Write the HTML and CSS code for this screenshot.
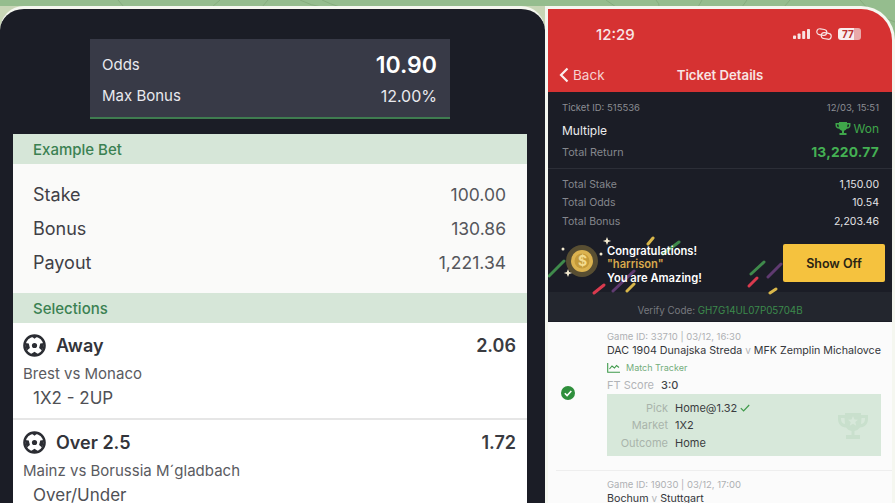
FILE: index.html
```html
<!DOCTYPE html>
<html lang="en">
<head>
<meta charset="utf-8">
<title>Tickets</title>
<link rel="stylesheet" href="styles.css">
</head>
<body>
<svg class="pattern" width="895" height="40" viewBox="0 0 895 40" aria-hidden="true">
  <g fill="none" stroke="#86ad7e" stroke-width="1">
    <path d="M118 0l6 7M212 7l8-7M268 0l-6 7M300 0q12 6 22 7M340 7q-10-3-18-7M606 0l10 7M656 0q4 4 3 7M702 0l-4 7M747 0l-5 7M790 0l-6 7M860 0q10 14 35 22"/>
  </g>
</svg>
<main class="stage">
  <section class="phone phone-left">
    <div class="left-inner">
      <div class="odds">
        <div class="odds-row"><span>Odds</span><strong>10.90</strong></div>
        <div class="odds-row"><span>Max Bonus</span><span class="pct">12.00%</span></div>
      </div>
      <div class="card">
        <h2 class="band">Example Bet</h2>
        <div class="example">
          <div class="ex-row"><span>Stake</span><span class="ex-val">100.00</span></div>
          <div class="ex-row"><span>Bonus</span><span class="ex-val">130.86</span></div>
          <div class="ex-row"><span>Payout</span><span class="ex-val">1,221.34</span></div>
        </div>
        <h2 class="band">Selections</h2>
        <article class="sel">
          <div class="sel-head">
            <svg class="ball" viewBox="0 0 24 24" aria-hidden="true"><circle cx="12" cy="12" r="10.500" fill="#fff" stroke="#2b2d33" stroke-width="2.600"/><circle cx="12" cy="12" r="2.700" fill="#2b2d33"/><path d="M8.500 2l3.500 3 3.500-3zM2 9.500l4 .5 1.200 4.500-3.400 3zM22 9.500l-4 .5-1.200 4.500 3.400 3zM8 21l4-2.600 4 2.600-1 1.500H9z" fill="#2b2d33"/></svg>
            <span class="sel-name">Away</span><span class="sel-odds">2.06</span>
          </div>
          <div class="sel-match">Brest vs Monaco</div>
          <div class="sel-market">1X2 - 2UP</div>
        </article>
        <article class="sel">
          <div class="sel-head">
            <svg class="ball" viewBox="0 0 24 24" aria-hidden="true"><circle cx="12" cy="12" r="10.500" fill="#fff" stroke="#2b2d33" stroke-width="2.600"/><circle cx="12" cy="12" r="2.700" fill="#2b2d33"/><path d="M8.500 2l3.500 3 3.500-3zM2 9.500l4 .5 1.200 4.500-3.400 3zM22 9.500l-4 .5-1.200 4.500 3.400 3zM8 21l4-2.600 4 2.600-1 1.500H9z" fill="#2b2d33"/></svg>
            <span class="sel-name">Over 2.5</span><span class="sel-odds">1.72</span>
          </div>
          <div class="sel-match">Mainz vs Borussia M´gladbach</div>
          <div class="sel-market">Over/Under</div>
        </article>
      </div>
    </div>
  </section>

  <section class="phone phone-right">
    <header class="red">
      <div class="status">
        <span class="time">12:29</span>
        <span class="status-icons">
          <svg width="17" height="10" viewBox="0 0 17 10" aria-hidden="true"><g fill="#f7e3e3"><rect x="0" y="6.500" width="3" height="3.500" rx=".8"/><rect x="4.600" y="4.500" width="3" height="5.500" rx=".8"/><rect x="9.200" y="2" width="3" height="8" rx=".8"/><rect x="14" y="0" width="3" height="10" rx=".8"/></g></svg>
          <svg width="18" height="12" viewBox="0 0 18 12" aria-hidden="true"><g fill="none" stroke="#f7e3e3" stroke-width="1.200" transform="rotate(10 9 6)"><rect x="1.500" y="1.500" width="10" height="6" rx="3"/><rect x="6.500" y="4.500" width="10" height="6" rx="3"/></g></svg>
          <span class="battery">77</span>
        </span>
      </div>
      <nav class="nav">
        <span class="back"><svg width="10" height="16" viewBox="0 0 10 16" aria-hidden="true"><path d="M8.500 1.500L2 8l6.500 6.500" fill="none" stroke="#fbecec" stroke-width="2.200"/></svg>Back</span>
        <span class="nav-title">Ticket Details</span>
      </nav>
    </header>
    <div class="dark">
      <div class="summary">
        <div class="line meta"><span>Ticket ID: 515536</span><span>12/03, 15:51</span></div>
        <div class="line multi"><span>Multiple</span>
          <span class="won"><svg width="16" height="14" viewBox="0 0 16 14" aria-hidden="true"><path d="M4 0h8v1h3.500v2.500c0 2-1.500 3-3.800 3.200C11 7.800 10 8.500 9 8.700V11h2.500v2h-7v-2H7V8.700C6 8.500 5 7.800 4.300 6.700 2 6.500.5 5.500.5 3.500V1H4zM2 2.500v1c0 1 .7 1.500 1.800 1.700L3.500 2.500zM14 2.500h-1.500l-.3 2.700C13.300 5 14 4.500 14 3.500z" fill="#3fa64a"/></svg>Won</span></div>
        <div class="line ret"><span>Total Return</span><strong>13,220.77</strong></div>
      </div>
      <div class="totals">
        <div class="line"><span>Total Stake</span><span class="tv">1,150.00</span></div>
        <div class="line"><span>Total Odds</span><span class="tv">10.54</span></div>
        <div class="line"><span>Total Bonus</span><span class="tv">2,203.46</span></div>
      </div>
      <div class="banner">
        <svg class="confetti" width="345" height="62" viewBox="0 0 345 62" aria-hidden="true">
          <g stroke-width="3" stroke-linecap="round" fill="none">
            <path d="M1 42l15-15M115 20l16-12M203 40l13-12" stroke="#3f8a4b"/>
            <path d="M46 59l10-8M201 52l8-8" stroke="#d93a4e"/>
            <path d="M65 57l21-20M220 43l13-13" stroke="#5f3a70"/>
            <path d="M100 10l5-6M79 57l7-7M222 59l6-4" stroke="#d8b64a"/>
          </g>
          <g fill="#f2e9cf"><path d="M59 3l1.200 3 3 1-3 1-1.200 3-1.200-3-3-1 3-1z"/><circle cx="15" cy="15" r="1.500"/><circle cx="53" cy="20" r="1.500"/><path d="M20 35l1.200 3 3 1-3 1-1.200 3-1.200-3-3-1 3-1z"/></g>
          <circle cx="34" cy="27" r="16" fill="#e8c04f" opacity=".3"/>
          <circle cx="34" cy="27" r="11" fill="#dcb350"/>
          <circle cx="34" cy="27" r="7.500" fill="#c49a3a"/>
        </svg>
        <div class="coin-sign">$</div>
        <div class="congrats"><div>Congratulations!</div><div class="user">"harrison"</div><div>You are Amazing!</div></div>
        <button class="show">Show Off</button>
      </div>
      <div class="verify">Verify Code: <span>GH7G14UL07P05704B</span></div>
    </div>
    <div class="games">
      <article class="game">
        <div class="tick"><svg width="14" height="14" viewBox="0 0 14 14" aria-hidden="true"><circle cx="7" cy="7" r="7" fill="#2f8f3c"/><path d="M3.800 7.200l2.300 2.300 4.200-4.500" fill="none" stroke="#fff" stroke-width="1.600"/></svg></div>
        <div class="game-body">
          <div class="gid">Game ID: 33710 | 03/12, 16:30</div>
          <div class="gname">DAC 1904 Dunajska Streda <i>v</i> MFK Zemplin Michalovce</div>
          <div class="tracker"><svg width="13" height="10" viewBox="0 0 13 10" aria-hidden="true"><path d="M.7 0v9.300H13M2.500 6l2.500-3 2.500 2 2-2.500 2.500 2" fill="none" stroke="#3f9a4b" stroke-width="1.100"/></svg>Match Tracker</div>
          <div class="score"><span>FT Score</span><b>3:0</b></div>
          <div class="pick">
            <div class="pick-row"><span>Pick</span><b>Home@1.32 <svg width="10" height="8" viewBox="0 0 10 8" aria-hidden="true"><path d="M.8 4.200l2.800 2.800L9.200 1" fill="none" stroke="#3f9a4b" stroke-width="1.200"/></svg></b></div>
            <div class="pick-row"><span>Market</span><b>1X2</b></div>
            <div class="pick-row"><span>Outcome</span><b>Home</b></div>
            <svg class="cup" width="30" height="26" viewBox="0 0 30 26" aria-hidden="true"><path fill-rule="evenodd" d="M7 0h16v2h7v4c0 5-3 8-8 8.500-1.500 2-3.500 3.200-5.500 3.500v4H22v4H8v-4h5.500v-4C11.500 17.700 9.500 16.500 8 14.500 3 14 0 11 0 6V2h7zM3 5v1c0 3 1.500 4.500 4 5L6.500 5zM27 5h-3.500L23 11c2.500-.5 4-2 4-5zM15 3l1.500 3.500 3.500.3-2.700 2.300.9 3.600L15 10.800l-3.200 1.900.9-3.600L10 6.800l3.500-.3z" fill="#c9e0cd"/></svg>
          </div>
        </div>
      </article>
      <article class="game next">
        <div class="tick"></div>
        <div class="game-body">
          <div class="gid">Game ID: 19030 | 03/12, 17:00</div>
          <div class="gname">Bochum <i>v</i> Stuttgart</div>
        </div>
      </article>
    </div>
  </section>
</main>
</body>
</html>
```
FILE: styles.css
```css
* { box-sizing: border-box; margin: 0; padding: 0; }
html, body { width: 895px; height: 503px; overflow: hidden; }
body { background: #95bd8e; font-family: Inter, "Liberation Sans", sans-serif; position: relative; }
.pattern { position: absolute; left: 0; top: 0; }
.stage { position: relative; display: flex; height: 503px; padding-top: 6px; }

.phone { height: 510px; flex: none; overflow: hidden; }
.phone-left { width: 548px; background: #c8d6b6; border-right: 3px solid #f5f7f0; }
.left-inner { height: 100%; background: #1b1d26; border-top: 3px solid #f5f7f0; border-radius: 24px 24px 0 0; padding-top: 30px; }
.phone-right { width: 347px; background: #fbfbfb; border-radius: 0 34px 0 0; border-top: 3px solid #f5f7f0; border-right: 3px solid #f5f7f0; }

.odds { width: 360px; height: 80px; margin-left: 90px; background: #383a47; border-bottom: 2px solid #3f7c50; padding: 10px 13px 0 12px; color: #e9e9ee; }
.odds-row { display: flex; justify-content: space-between; align-items: center; height: 31px; font-size: 15px; }
.odds-row strong { font-size: 23px; font-weight: 600; color: #fff; }
.pct { font-size: 16px; }

.card { width: 514px; margin: 15px 0 0 13px; background: #fff; }
.band { height: 30px; background: #d6e6d8; color: #3b8152; font-size: 15px; font-weight: 500; line-height: 31px; padding-left: 20px; }
.example { height: 129px; background: #fafaf9; padding: 14px 21px 0 20px; }
.ex-row { display: flex; justify-content: space-between; height: 34px; line-height: 34px; font-size: 18px; color: #3f4046; }
.ex-val { font-size: 17.500px; color: #55565c; }

.sel { height: 97px; padding: 10px 11px 0 10px; border-bottom: 2px solid #e6e6e6; color: #2f3036; }
.sel-head { display: flex; align-items: center; height: 24px; gap: 10px; }
.ball { width: 23px; height: 23px; }
.sel-name { font-size: 18px; font-weight: 600; flex: 1; color: #33343a; }
.sel-odds { font-size: 18px; font-weight: 600; color: #3a3b41; }
.sel-match { font-size: 15px; margin-top: 7px; line-height: 20px; color: #5a5b61; }
.sel-market { font-size: 17px; margin: 2px 0 0 10px; line-height: 24px; color: #4f5055; }

.red { height: 83px; background: #d63232; color: #fff; }
.status { display: flex; justify-content: space-between; align-items: center; height: 50px; padding: 0 31px 0 48px; }
.time { font-size: 15px; font-weight: 500; color: #f9e6e6; }
.status-icons { display: flex; align-items: center; gap: 5px; }
.battery { background: linear-gradient(90deg, #f9eeee 70%, #e9a9a9 70%); color: #b83030; border-radius: 3px; font-size: 10px; font-weight: 700; width: 23px; height: 12px; line-height: 12px; padding-right: 3px; text-align: center; }
.nav { position: relative; display: flex; align-items: center; justify-content: center; height: 31px; }
.nav-title { font-size: 13.200px; font-weight: 600; color: #f8e4e4; }
.back { position: absolute; left: 11px; top: 8px; display: flex; align-items: center; gap: 4px; font-size: 13.500px; color: #f6d0d0; }

.dark { background: #1b1d26; height: 230px; }
.summary { height: 77px; padding: 8px 13px 0 14px; border-bottom: 1px solid #2c2e37; }
.line { display: flex; justify-content: space-between; align-items: center; }
.meta { font-size: 9.500px; color: #8b8d93; height: 14px; }
.multi { font-size: 12px; color: #eceded; height: 30px; padding-top: 3px; }
.won { display: flex; align-items: center; gap: 3px; color: #3fa64a; font-size: 12px; margin-top: -4px; }
.ret { font-size: 10.800px; color: #85878d; height: 12px; margin-top: 2px; }
.ret strong { font-size: 13.800px; font-weight: 700; color: #44b053; letter-spacing: .2px; }
.totals { padding: 6px 13px 0 14px; height: 65px; font-size: 10.500px; color: #85878d; }
.totals .line { height: 18.500px; }
.tv { color: #e4e4e6; }
.banner { position: relative; height: 58px; display: flex; align-items: center; justify-content: space-between; padding: 0 7px 0 59px; }
.confetti { position: absolute; left: 0; top: 0; }
.coin-sign { position: absolute; left: 30px; top: 18px; color: #f3db8e; font-size: 14px; font-weight: 700; line-height: 18px; }
.congrats { position: relative; top: 2px; font-size: 11.200px; font-weight: 600; color: #fff; line-height: 13.500px; }
.user { color: #d8a94c; }
.show { position: relative; width: 102px; height: 38px; border: 0; border-radius: 2px; background: #f5c23e; color: #2a2414; font: 600 12.500px Inter, "Liberation Sans", sans-serif; }
.verify { height: 29px; padding-top: 8px; background: #23262e; text-align: center; font-size: 9.800px; line-height: 21px; color: #77797f; }
.verify span { color: #3c8a4c; }

.game { display: flex; padding: 8px 11px 14px 0; margin-left: 8px; border-bottom: 1px solid #eeeeee; }
.tick { width: 51px; flex: none; padding: 54px 0 0 5px; }
.game-body { flex: 1; min-width: 0; }
.gid { font-size: 9.500px; color: #aeb0b3; line-height: 13px; }
.gname { font-size: 10.700px; color: #34363a; line-height: 15px; white-space: nowrap; }
.gname i { color: #b4b6b9; font-style: normal; font-size: 10px; }
.tracker { display: flex; align-items: center; gap: 6px; font-size: 9px; color: #74ad7c; height: 19px; }
.score { display: flex; gap: 7px; font-size: 11px; height: 15px; align-items: center; color: #b2b4b7; }
.score b { font-weight: 500; color: #44464a; }
.pick { position: relative; margin-top: 2px; height: 62px; background: #d7e8da; padding-top: 5px; }
.pick-row { display: flex; height: 17.500px; align-items: center; font-size: 11px; gap: 7px; }
.pick-row span { width: 61px; text-align: right; color: #a9b4ab; }
.pick-row b { font-weight: 400; color: #3a3c40; }
.cup { position: absolute; right: 13px; top: 19px; }
.next { border-bottom: 0; padding-top: 7px; }
```
